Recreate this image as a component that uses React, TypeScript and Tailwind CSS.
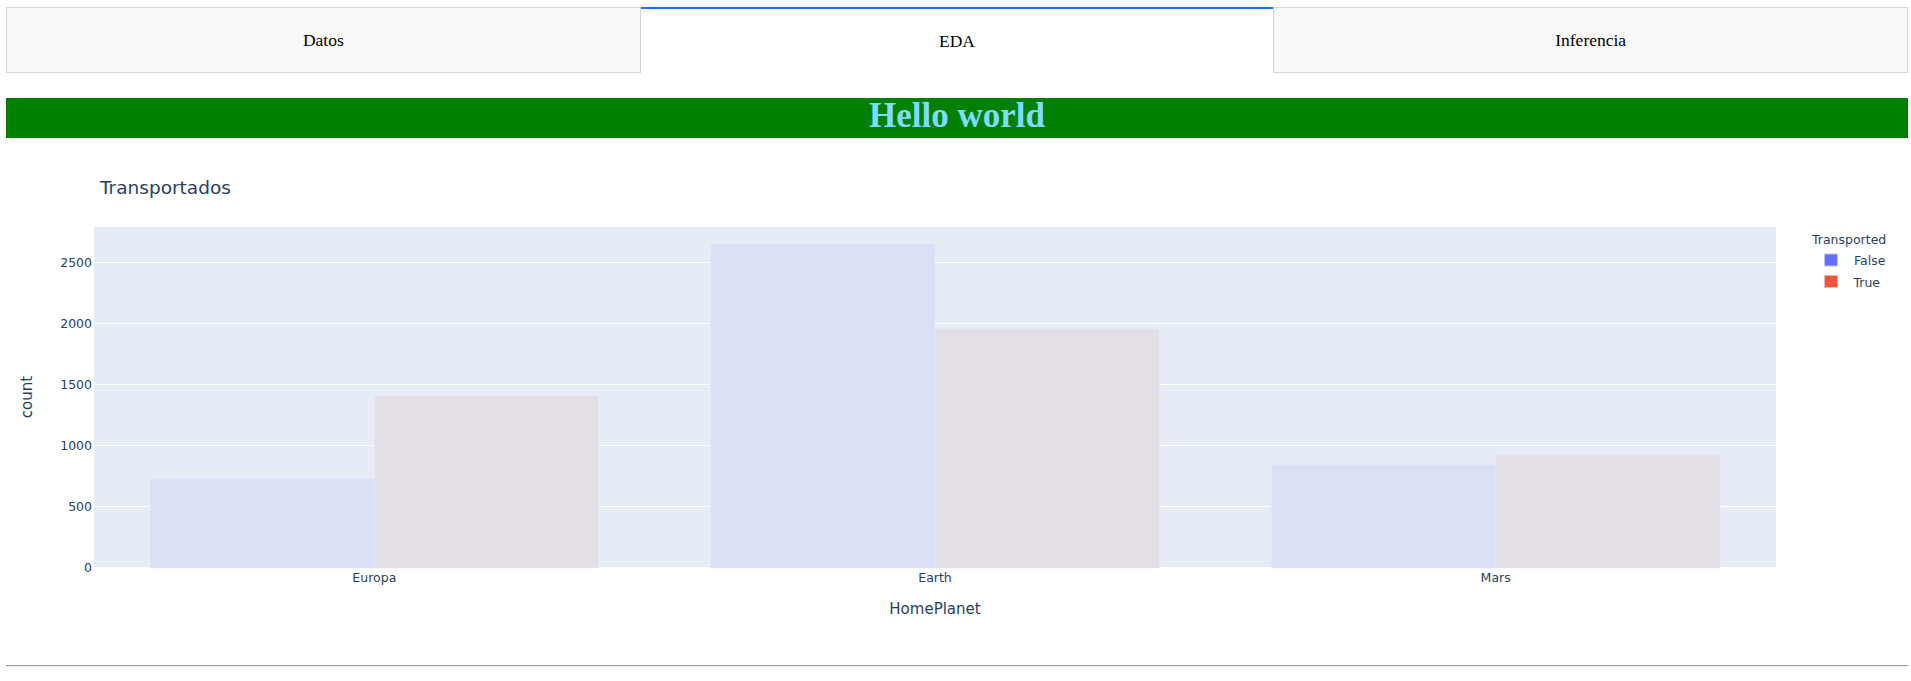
import React from "react";

const yOf = (v: number) => 567 - v * (61 / 500);

const planets = [
  { name: "Europa", f: 727, t: 1404 },
  { name: "Earth", f: 2651, t: 1951 },
  { name: "Mars", f: 839, t: 920 },
];

const plotL = 94;
const plotR = 1776;
const catW = (plotR - plotL) / 3;
const barW = catW * 0.4;

const Chart = () => {
  return (
    <svg
      width={1902}
      height={527}
      viewBox="6 138 1902 527"
      className="block"
      style={{ fontFamily: '"DejaVu Sans", Verdana, sans-serif' }}
    >
      <text x={100} y={194} fontSize={18.5} fill="#2a3f5f">
        Transportados
      </text>

      <rect x={plotL} y={227} width={plotR - plotL} height={340} fill="#e5ecf6" />
      {[500, 1000, 1500, 2000, 2500].map((v) => (
        <line
          key={v}
          x1={plotL}
          x2={plotR}
          y1={Math.round(yOf(v)) + 0.5}
          y2={Math.round(yOf(v)) + 0.5}
          stroke="#ffffff"
          strokeWidth={1}
        />
      ))}

      {planets.map((p, i) => {
        const c = plotL + catW * (i + 0.5);
        return (
          <g key={p.name}>
            <rect
              x={c - barW}
              y={yOf(p.f)}
              width={barW}
              height={568 - yOf(p.f)}
              fill="#dae0f5"
              stroke="#e5ecf6"
              strokeWidth={0.5}
            />
            <rect
              x={c}
              y={yOf(p.t)}
              width={barW}
              height={568 - yOf(p.t)}
              fill="#e4dfe6"
              stroke="#e5ecf6"
              strokeWidth={0.5}
            />
            <text x={c} y={581.5} fontSize={12.5} fill="#2a3f5f" textAnchor="middle">
              {p.name}
            </text>
          </g>
        );
      })}

      {[0, 500, 1000, 1500, 2000, 2500].map((v) => (
        <text
          key={v}
          x={92}
          y={Math.round(yOf(v)) + 5}
          fontSize={12.5}
          fill="#2a3f5f"
          textAnchor="end"
        >
          {v}
        </text>
      ))}

      <text x={935} y={613.5} fontSize={15} fill="#2a3f5f" textAnchor="middle">
        HomePlanet
      </text>
      <text
        transform="translate(32 397) rotate(-90)"
        fontSize={15}
        fill="#2a3f5f"
        textAnchor="middle"
      >
        count
      </text>

      {/* legend */}
      <text x={1812} y={243.5} fontSize={12.5} fill="#2a3f5f">
        Transported
      </text>
      <rect x={1824.5} y={254} width={13} height={12} fill="#636efa" stroke="#c1c5fc" strokeWidth={1} />
      <text x={1854} y={265} fontSize={12.5} fill="#2a3f5f">
        False
      </text>
      <rect x={1824.5} y={275.5} width={13} height={12} fill="#ef553b" stroke="#f7b6aa" strokeWidth={1} />
      <text x={1853.5} y={286.5} fontSize={12.5} fill="#2a3f5f">
        True
      </text>
    </svg>
  );
};

const App = () => {
  return (
    <div className="min-h-[681px] bg-white pl-[6px] pr-[3px] pt-[7px] font-['Liberation_Serif',serif] text-black">
      <div className="flex h-[66px] text-[17.5px]">
        <div className="flex flex-1 items-center justify-center border border-[#d6d6d6] bg-[#f9f9f9]">
          Datos
        </div>
        <div className="flex flex-1 items-center justify-center border-t-2 border-[#1975fa] bg-white">
          EDA
        </div>
        <div className="flex flex-1 items-center justify-center border border-[#d6d6d6] bg-[#f9f9f9]">
          Inferencia
        </div>
      </div>

      <div className="mt-[25px] h-[40px] bg-[#008000]">
        <h1 className="text-center text-[35px] font-bold leading-[35px] text-[#7fdbff]">
          Hello world
        </h1>
      </div>

      <Chart />

      <div className="h-[2px] border-t border-b border-t-[#9a9a9a] border-b-[#eeeeee]" />
    </div>
  );
};

export default App;
